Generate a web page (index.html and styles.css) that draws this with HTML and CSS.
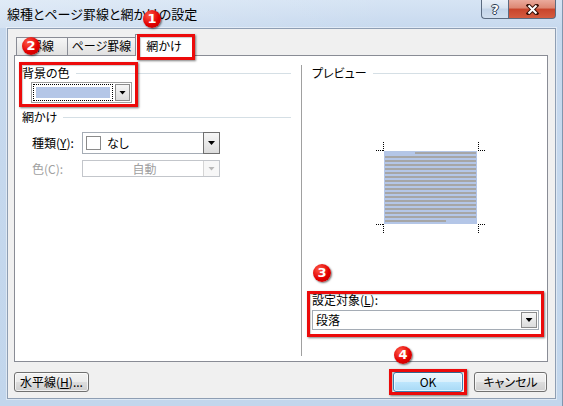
FILE: index.html
```html
<!DOCTYPE html>
<html lang="ja">
<head>
    <meta charset="UTF-8">
    <meta name="viewport" content="width=device-width, initial-scale=1.0">
    <title>線種とページ罫線と網かけの設定</title>
    <link rel="stylesheet" href="styles.css">
</head>
<body>
    <div class="window">
        <div class="titlebar">
            <span class="title">線種とページ罫線と網かけの設定</span>
            <div class="caption-buttons">
                <div class="cap-btn help"><span>?</span></div>
                <div class="cap-btn close">
                    <svg width="13" height="11" viewBox="0 0 13 11">
                        <path d="M2.5 1.5L10.5 9.5M10.5 1.5L2.5 9.5" stroke="#3b1208" stroke-width="4" stroke-linecap="square"/>
                        <path d="M2.5 1.5L10.5 9.5M10.5 1.5L2.5 9.5" stroke="#fff" stroke-width="2"/>
                    </svg>
                </div>
            </div>
        </div>

        <div class="client">
            <div class="tabs">
                <div class="tab tab-borders">罫線</div>
                <div class="tab tab-page">ページ罫線</div>
                <div class="tab tab-shading selected">網かけ</div>
            </div>

            <div class="panel">
                <div class="col col-left">
                    <div class="group-title">背景の色</div>
                    <div class="color-combo">
                        <div class="swatch-focus"><div class="swatch"></div></div>
                        <div class="drop-btn"><i class="arrow"></i></div>
                    </div>

                    <div class="group-title second">網かけ</div>
                    <div class="field">
                        <label>種類(<u>Y</u>):</label>
                        <div class="combo pattern">
                            <div class="combo-value"><span class="pattern-box"></span>なし</div>
                            <div class="drop-btn dark"><i class="arrow"></i></div>
                        </div>
                    </div>
                    <div class="field disabled">
                        <label>色(C):</label>
                        <div class="combo small">
                            <div class="combo-value centered">自動</div>
                            <div class="drop-btn"><i class="arrow"></i></div>
                        </div>
                    </div>
                </div>

                <div class="divider"></div>

                <div class="col col-right">
                    <div class="group-title">プレビュー</div>
                    <!-- paragraph preview: shaded page with text lines and crop marks -->
                    <svg class="preview" width="110" height="92" viewBox="0 0 110 92">
                        <defs>
                            <pattern id="textLines" width="4" height="4" y="2" patternUnits="userSpaceOnUse">
                                <rect width="4" height="2" fill="#a6a6a6"/>
                            </pattern>
                        </defs>
                        <rect x="8" y="9" width="93" height="73" fill="#b4c6e7"/>
                        <rect x="39" y="10" width="61" height="2" fill="#a6a6a6"/>
                        <rect x="9" y="14" width="91" height="62" fill="url(#textLines)"/>
                        <rect x="9" y="78" width="61" height="2" fill="#a6a6a6"/>
                        <g stroke="#000" stroke-width="1" stroke-dasharray="1 1" fill="none">
                            <path d="M7.5 0V9M0 8.5H8"/>
                            <path d="M102.5 0V9M102 8.5H110"/>
                            <path d="M0 82.5H8M7.5 82V92"/>
                            <path d="M102 82.5H110M102.5 82V92"/>
                        </g>
                    </svg>
                    <div class="apply-label">設定対象(<u>L</u>):</div>
                    <div class="combo apply">
                        <div class="combo-value">段落</div>
                        <div class="drop-btn"><i class="arrow"></i></div>
                    </div>
                </div>
            </div>

            <div class="footer">
                <button class="btn btn-line">水平線(<u>H</u>)...</button>
                <div class="footer-right">
                    <button class="btn btn-ok default">OK</button>
                    <button class="btn btn-cancel">キャンセル</button>
                </div>
            </div>
        </div>

        <!-- step callouts -->
        <div class="callout callout-tab"></div>
        <div class="callout callout-color"></div>
        <div class="callout callout-apply"></div>
        <div class="callout callout-ok"></div>
        <div class="badge badge-1">1</div>
        <div class="badge badge-2">2</div>
        <div class="badge badge-3">3</div>
        <div class="badge badge-4">4</div>
    </div>
</body>
</html>
```

FILE: styles.css
```css
body {
    margin: 0;
    font-family: "Noto Sans CJK JP", sans-serif;
    font-size: 12px;
    font-feature-settings: "palt";
    color: #000;
    background: #fff;
}

.window {
    position: relative;
    width: 563px;
    height: 406px;
    display: flex;
    flex-direction: column;
    overflow: hidden;
    background: linear-gradient(to bottom, #d6e4f4 0, #c7d9ee 28px, #c2d6ec 100%);
    box-shadow: inset -1px 0 0 #8196ae;
}

/* title bar */
.titlebar {
    height: 28px;
    display: flex;
    justify-content: space-between;
    align-items: flex-start;
    padding: 0 7px 0 7px;
    background: linear-gradient(to right, rgba(255,255,255,0.25), rgba(255,255,255,0) 70%);
}
.title {
    font-size: 13px;
    line-height: 15px;
    margin-top: 6px;
}
.caption-buttons {
    display: flex;
}
.cap-btn {
    height: 19px;
    box-sizing: border-box;
    border: 1px solid #5b6b80;
    border-top: none;
    display: grid;
    place-items: center;
}
.cap-btn.help {
    width: 27px;
    border-right: none;
    border-radius: 0 0 0 4px;
    background: linear-gradient(#e9f0f8, #d6e2ef 45%, #c3d4e8 50%, #d1deee);
}
.cap-btn.help span {
    font: bold 13px/13px "DejaVu Sans", sans-serif;
    color: #fff;
    text-shadow: 1px 0 0 #2b3b50, -1px 0 0 #2b3b50, 0 1px 0 #2b3b50, 0 -1px 0 #2b3b50;
}
.cap-btn.close {
    width: 48px;
    border-radius: 0 0 4px 0;
    background: linear-gradient(#eaaa9c, #dd8672 45%, #c8442b 50%, #d55c40);
}

/* client area */
.client {
    width: 549px;
    height: 371px;
    margin-left: 7px;
    box-sizing: border-box;
    border: 1px solid #8e9eb3;
    box-shadow: 0 0 0 1px rgba(255,255,255,0.45);
    background: #f0f0f0;
    padding: 5px 7px 6px 6px;
    display: flex;
    flex-direction: column;
}

.tabs {
    height: 21px;
    display: flex;
    align-items: flex-end;
    padding-left: 2px;
    position: relative;
    z-index: 1;
}
.tab {
    height: 18px;
    box-sizing: border-box;
    border: 1px solid #898c95;
    border-bottom: none;
    margin-right: -1px;
    background: linear-gradient(#f6f6f6, #e1e1e1);
    line-height: 16px;
    text-align: center;
}
.tab-borders { width: 52px; }
.tab-page { width: 69px; }
.tab-shading { width: 58px; }
.tab.selected {
    height: 22px;
    margin-bottom: -1px;
    padding-top: 3px;
    background: #fff;
}

.panel {
    position: relative;
    height: 307px;
    box-sizing: border-box;
    border: 1px solid #898c95;
    background: #fff;
    display: flex;
}
.col-left {
    width: 286px;
    box-sizing: border-box;
    padding: 10px 10px 0 7px;
}
.divider {
    width: 1px;
    background: #a0a0a0;
    margin: 9px 0 5px;
}
.col-right {
    flex: 1;
    padding: 10px 6px 0 10px;
}

.group-title {
    display: flex;
    align-items: center;
    gap: 6px;
    line-height: 14px;
}
.group-title::after {
    content: "";
    flex: 1;
    height: 1px;
    background: #d5dfe5;
}
.group-title.second {
    margin-top: 7px;
}

/* drop-down pieces */
.drop-btn {
    box-sizing: border-box;
    border: 1px solid #8c8c8c;
    background: linear-gradient(#f6f6f6, #dcdcdc);
    display: grid;
    place-items: center;
}
.drop-btn.dark {
    border-color: #6f6f6f;
}
.arrow {
    width: 7px;
    height: 4px;
    background: #000;
    clip-path: polygon(0 0, 100% 0, 50% 100%);
}

.color-combo {
    width: 101px;
    height: 21px;
    margin: 2px 0 0 9px;
    box-sizing: border-box;
    border: 1px solid #a0a0a0;
    background: #fff;
    padding: 1px;
    display: flex;
    gap: 2px;
}
.swatch-focus {
    width: 80px;
    box-sizing: border-box;
    border: 1px dotted #000;
    padding: 2px;
}
.swatch {
    height: 100%;
    background: #b4c6e7;
}
.color-combo .drop-btn {
    flex: 1;
}

.field {
    display: flex;
    align-items: center;
    margin-top: 8px;
    padding-left: 10px;
}
.field label {
    width: 50px;
    line-height: 14px;
}
.field.disabled {
    margin-top: 6px;
    color: #a0a0a0;
}

.combo {
    box-sizing: border-box;
    border: 1px solid #a5acb5;
    background: #fff;
    display: flex;
}
.combo .drop-btn {
    width: 17px;
    margin: -1px -1px -1px 0;
}
.combo-value {
    flex: 1;
    display: flex;
    align-items: center;
    gap: 6px;
    padding-left: 3px;
    line-height: 14px;
}
.combo-value.centered {
    justify-content: center;
}
.combo.pattern {
    width: 138px;
    height: 22px;
}
.pattern-box {
    width: 15px;
    height: 14px;
    box-sizing: border-box;
    border: 1px solid #8a8a8a;
}
.combo.small {
    width: 138px;
    height: 17px;
    border-color: #c3c6cb;
}
.combo.small .drop-btn {
    margin: 0;
    width: 16px;
    border: none;
    border-left: 1px solid #d5d5d5;
    background: #f7f7f7;
}
.combo.small .arrow {
    background: #b8b8b8;
}

.preview {
    display: block;
    margin: 62px 0 0 64px;
}
.apply-label {
    margin-top: 59px;
    line-height: 14px;
}
.combo.apply {
    width: 227px;
    height: 20px;
    margin-top: 3px;
}
.combo.apply .drop-btn {
    width: 16px;
    margin: 1px 1px 1px 0;
}

/* bottom buttons */
.footer {
    margin-top: 10px;
    display: flex;
    justify-content: space-between;
    align-items: center;
}
.footer-right {
    display: flex;
    gap: 11px;
    margin-right: 1px;
}
.btn {
    height: 20px;
    padding: 0;
    font: inherit;
    font-weight: normal;
    line-height: 16px;
    color: #000;
    border: 1px solid #707070;
    border-radius: 3px;
    background: linear-gradient(#f2f2f2 0%, #ebebeb 50%, #dddddd 50%, #cfcfcf 100%);
    box-shadow: inset 0 0 0 1px rgba(255,255,255,0.7);
}
.btn-line { width: 75px; }
.btn-ok { width: 70px; }
.btn-cancel { width: 73px; }
.btn.default {
    border-color: #3c7fb1;
    background: linear-gradient(#eaf6fd 0%, #d9f0fc 50%, #bee6fd 50%, #a7d9f5 100%);
}

/* red callout frames and numbered markers */
.callout {
    position: absolute;
    z-index: 2;
    box-sizing: border-box;
    border: 3px solid #ec0b0b;
    box-shadow: 1px 1px 2px rgba(0,0,0,0.5), inset 1px 1px 1px rgba(0,0,0,0.2);
}
.callout-tab { left: 137px; top: 34px; width: 58px; height: 26px; }
.callout-color { left: 19px; top: 62px; width: 119px; height: 45px; }
.callout-apply { left: 307px; top: 291px; width: 237px; height: 46px; }
.callout-ok { left: 389px; top: 369px; width: 78px; height: 26px; }

.badge {
    position: absolute;
    z-index: 3;
    width: 18px;
    height: 18px;
    border-radius: 50%;
    background: radial-gradient(circle at 35% 30%, #ff5a48, #e20000 55%, #b80000);
    color: #fff;
    font: 900 13px/18px "DejaVu Sans", sans-serif;
    text-align: center;
    box-shadow: 1px 1px 2px rgba(0,0,0,0.55);
}
.badge-1 { left: 143px; top: 10px; }
.badge-2 { left: 22px; top: 37px; }
.badge-3 { left: 313px; top: 264px; }
.badge-4 { left: 394px; top: 346px; }
```
